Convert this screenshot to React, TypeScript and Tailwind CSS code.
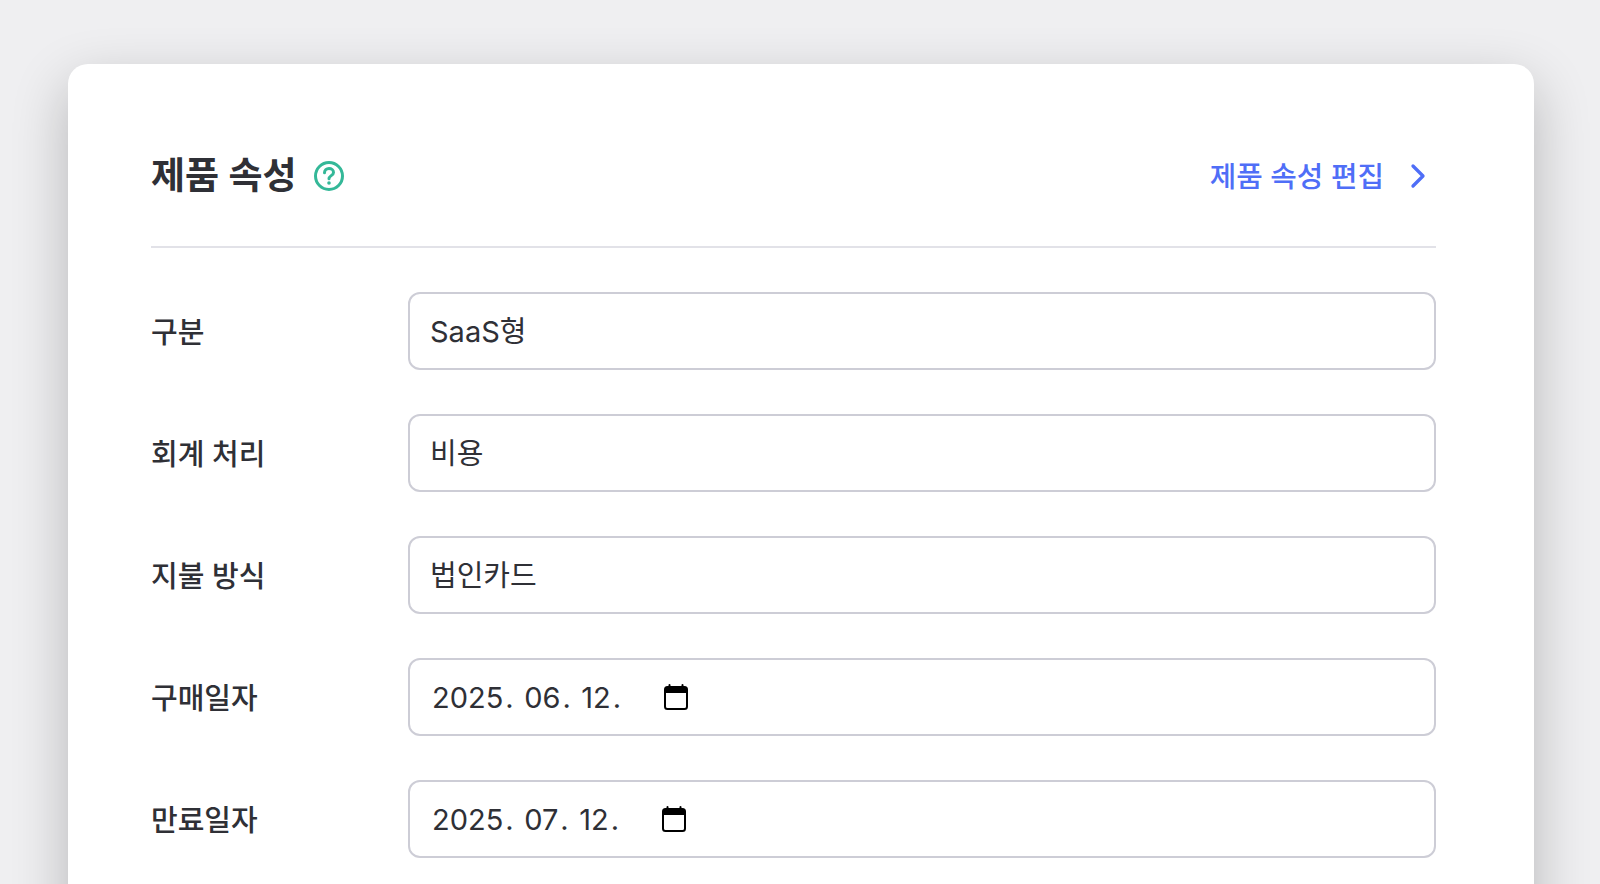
import { ChevronRight } from "lucide-react";

const font = "font-['Inter','Noto_Sans_CJK_KR',sans-serif]";

const fields = [
  { label: "구분", value: "SaaS형" },
  { label: "회계 처리", value: "비용" },
  { label: "지불 방식", value: "법인카드" },
];

const dates = [
  { label: "구매일자", parts: ["2025", "06", "12"] },
  { label: "만료일자", parts: ["2025", "07", "12"] },
];

const CalendarIcon: React.FC = () => (
  <svg width="24" height="26" viewBox="0 0 24 26" fill="none" className="text-black">
    <path d="M5.5 1v4M18.5 1v4" stroke="currentColor" strokeWidth="2" strokeLinecap="round" />
    <rect x="1" y="3" width="22" height="22" rx="2.5" stroke="currentColor" strokeWidth="2" />
    <path d="M1 5.5A2.5 2.5 0 0 1 3.5 3h17A2.5 2.5 0 0 1 23 5.5V9H1z" fill="currentColor" />
  </svg>
);

const Row: React.FC<{ label: string; children: React.ReactNode }> = ({ label, children }) => (
  <div className="flex items-center">
    <label className="w-[257px] shrink-0 pt-[3px] text-[29px] font-medium text-[#2f3036]">{label}</label>
    <div className="flex h-[78px] flex-1 items-center rounded-[12px] border-2 border-[#cdcdd6] bg-white px-5 text-[29px] text-[#2f3036]">
      {children}
    </div>
  </div>
);

const App: React.FC = () => {
  return (
    <div className={`h-[884px] overflow-hidden bg-[#efeff1] pr-[66px] pl-[68px] pt-[64px] ${font}`}>
      <div className="rounded-[20px] bg-white pt-[87px] pr-[98px] pb-[80px] pl-[83px] shadow-[0_20px_56px_rgba(0,0,0,0.24)]">
        <div className="flex h-[97px] items-start justify-between border-b-2 border-[#e2e2e8] pt-[2px]">
          <div className="flex items-center gap-[17px]">
            <h2 className="text-[37px] leading-[46px] font-semibold text-[#2f3036]">제품 속성</h2>
            <svg width="32" height="32" viewBox="0 0 32 32" fill="none" className="text-[#34b898]">
              <circle cx="16" cy="16" r="13.5" stroke="currentColor" strokeWidth="3" />
              <path d="M11.5 12.8c0-2.7 2-4.3 4.5-4.3s4.5 1.6 4.5 3.9c0 3.2-4.5 3.3-4.5 6.4" stroke="currentColor" strokeWidth="3" strokeLinecap="round" />
              <circle cx="16" cy="23" r="1.8" fill="currentColor" />
            </svg>
          </div>
          <a className="-mr-[2px] flex h-[46px] items-center gap-[14px] text-[28.8px] font-medium text-[#4f6ef7]">
            <span className="pt-[2px]">제품 속성 편집</span>
            <ChevronRight size={40} strokeWidth={2} />
          </a>
        </div>
        <div className="mt-[44px] flex flex-col gap-[44px]">
          {fields.map((f) => (
            <Row key={f.label} label={f.label}>
              <span className="pt-[2px]">{f.value}</span>
            </Row>
          ))}
          {dates.map((d) => (
            <Row key={d.label} label={d.label}>
              <span className="ml-[2px] flex pt-[1px]">
                <span>{d.parts[0]}</span>
                <span className="mr-[10.5px] ml-[2px]">.</span>
                <span>{d.parts[1]}</span>
                <span className="mr-[10.5px] ml-[2px]">.</span>
                <span>{d.parts[2]}</span>
                <span className="ml-[2px]">.</span>
              </span>
              <span className="ml-[43px]">
                <CalendarIcon />
              </span>
            </Row>
          ))}
        </div>
      </div>
    </div>
  );
};

export default App;
